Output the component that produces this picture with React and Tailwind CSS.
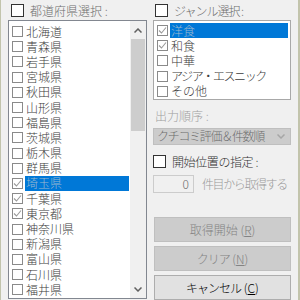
const prefs = [
  { name: '北海道' },
  { name: '青森県' },
  { name: '岩手県' },
  { name: '宮城県' },
  { name: '秋田県' },
  { name: '山形県' },
  { name: '福島県' },
  { name: '茨城県' },
  { name: '栃木県' },
  { name: '群馬県' },
  { name: '埼玉県', checked: true, selected: true },
  { name: '千葉県', checked: true },
  { name: '東京都', checked: true },
  { name: '神奈川県' },
  { name: '新潟県' },
  { name: '富山県' },
  { name: '石川県' },
  { name: '福井県' },
];

const genres = [
  { name: '洋食', checked: true, selected: true },
  { name: '和食', checked: true },
  { name: '中華' },
  { name: 'アジア・エスニック', kana: true },
  { name: 'その他' },
];

function SmallCheck({ checked }) {
  return (
    <span className="w-[11px] h-[11px] shrink-0 border border-[#8a8a8a] bg-white flex items-center justify-center">
      {checked && (
        <svg width="9" height="9" viewBox="0 0 9 9">
          <path d="M1 4.5 L3.5 7 L8 1.5" fill="none" stroke="#9a9a9a" strokeWidth="1.1" />
        </svg>
      )}
    </span>
  );
}

function BigCheck() {
  return <span className="w-[13px] h-[13px] shrink-0 border border-[#333333] bg-white" />;
}

function Chevron({ up, color = '#606060' }) {
  return (
    <svg width="8" height="5" viewBox="0 0 8 5">
      <path d={up ? 'M0.5 4.5 L4 1 L7.5 4.5' : 'M0.5 0.5 L4 4 L7.5 0.5'} fill="none" stroke={color} strokeWidth="1.5" />
    </svg>
  );
}

function Row({ item, barRight }) {
  return (
    <div className="h-[15.2px] flex items-center">
      <span className="ml-[3px]">
        <SmallCheck checked={item.checked} />
      </span>
      <span
        className={`ml-[2px] flex-1 h-[15px] flex items-center pl-[1px] overflow-hidden whitespace-nowrap ${barRight} ${item.selected ? 'bg-[#0078d7] text-[#9fb8cf]' : 'text-[#3c3c3c]'} ${item.kana ? 'tracking-[-1.4px]' : ''}`}
      >
        {item.name}
      </span>
    </div>
  );
}

function Button({ children, disabled }) {
  return (
    <div
      className={`h-[25px] flex items-center justify-center border ${disabled ? 'bg-[#cccccc] border-[#bfbfbf] text-[#838383]' : 'bg-[#e1e1e1] border-[#adadad] text-black'}`}
    >
      {children}
    </div>
  );
}

export default function App() {
  return (
    <div
      className="w-[300px] h-[300px] overflow-hidden bg-[#f0f0f0] flex border-l border-r-2 border-[#c2c4ac] text-[12px] leading-none font-light"
      style={{ fontFamily: '"Noto Sans CJK JP", sans-serif' }}
    >
      {/* left: prefecture list */}
      <div className="w-[146px] shrink-0 pl-[7px] flex flex-col">
        <div className="h-[20px] flex items-start pt-[4px] pl-[3px]">
          <BigCheck />
          <span className="ml-[6px] mt-[1px] text-[#6d6d6d]">都道府県選択 :</span>
        </div>
        <div className="h-[279px] w-[139px] border border-[#828790] bg-white flex">
          <div className="flex-1 pt-[3px]">
            {prefs.map((p) => (
              <Row key={p.name} item={p} barRight="mr-[1px]" />
            ))}
          </div>
          <div className="w-[16px] bg-[#f0f0f0] flex flex-col items-center">
            <div className="h-[18px] flex items-center justify-center">
              <Chevron up />
            </div>
            <div className="w-[14px] h-[92px] bg-[#cdcdcd]" />
            <div className="flex-1" />
            <div className="h-[18px] flex items-center justify-center">
              <Chevron />
            </div>
          </div>
        </div>
      </div>

      {/* right: genre + options */}
      <div className="w-[144px] shrink-0 pl-[6px] flex flex-col">
        <div className="h-[21px] flex items-start pt-[4px] pl-[2px]">
          <BigCheck />
          <span className="ml-[6px] mt-[1px] text-[#6d6d6d] tracking-[-1px]">ジャンル選択 :</span>
        </div>
        <div className="h-[81px] w-[138px] border border-[#a8a8a8] bg-white pt-[2px]">
          {genres.map((g) => (
            <Row key={g.name} item={g} barRight="mr-[2px]" />
          ))}
        </div>

        <div className="mt-[10px] ml-[2px] text-[#a0a0a0]">出力順序 :</div>
        <div className="mt-[6px] h-[18px] w-[138px] border border-[#bfbfbf] bg-[#cccccc] flex items-center pl-[3px] pr-[5px] text-[#6d6d6d]">
          <span className="flex-1 tracking-[-1.3px] whitespace-nowrap">クチコミ評価＆件数順</span>
          <Chevron color="#a6a6a6" />
        </div>

        <div className="mt-[10px] flex items-center">
          <BigCheck />
          <span className="ml-[6px] text-[#333333] tracking-[-0.4px]">開始位置の指定 :</span>
        </div>
        <div className="mt-[7px] flex items-center">
          <div className="w-[41px] h-[18px] border border-[#cccccc] bg-[#f0f0f0] flex items-center justify-end pr-[4px] text-[#6d6d6d]">
            0
          </div>
          <span className="ml-[8px] text-[#9a9a9a] tracking-[-1.4px] whitespace-nowrap">件目から取得する</span>
        </div>

        <div className="mt-[24px] w-[137px] ml-[1px] flex flex-col gap-[4px]">
          <Button disabled>
            取得開始 (<span className="underline">R</span>)
          </Button>
          <Button disabled>
            <span className="tracking-[-1px]">クリア</span>&nbsp;(<span className="underline">N</span>)
          </Button>
          <Button>
            <span className="tracking-[-1px]">キャンセル</span>&nbsp;(<span className="underline">C</span>)
          </Button>
        </div>
      </div>
    </div>
  );
}
